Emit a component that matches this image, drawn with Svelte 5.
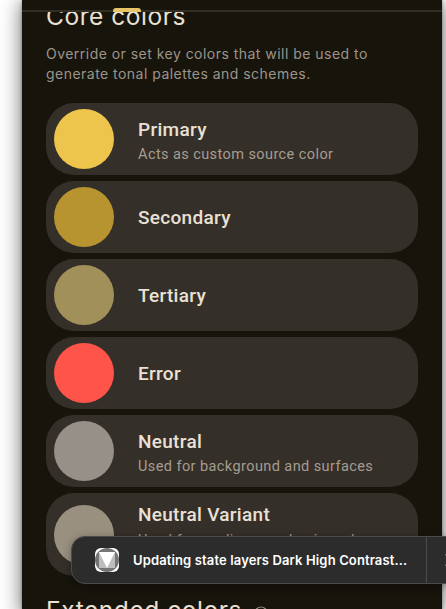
<script>
  const colors = [
    { name: 'Primary', note: 'Acts as custom source color', fill: '#edc54c' },
    { name: 'Secondary', fill: '#b7942f' },
    { name: 'Tertiary', fill: '#a2905b' },
    { name: 'Error', fill: '#ff544a' },
    { name: 'Neutral', note: 'Used for background and surfaces', fill: '#969089' },
    { name: 'Neutral Variant', note: 'Used for medium emphasis and variants', fill: '#999080' }
  ];
</script>

<div class="screen">
  <main class="panel">
    <div class="topbar"><span class="tab"></span></div>
    <div class="content">
      <h2>Core colors</h2>
      <p class="intro">Override or set key colors that will be used to generate tonal palettes and schemes.</p>
      <div class="list">
        {#each colors as color}
          <div class="card">
            <span class="swatch" style="background: {color.fill}"></span>
            <div class="label" class:noted={color.note}>
              <h3>{color.name}</h3>
              {#if color.note}<p>{color.note}</p>{/if}
            </div>
          </div>
        {/each}
      </div>
      <h2 class="extended">Extended colors
        <svg width="14" height="14" viewBox="0 0 14 14" fill="none" stroke="#999080" stroke-width="1.2"><circle cx="7" cy="7" r="6" /><path d="M7 6.3v4M7 3.5v1.3" /></svg>
      </h2>
    </div>
  </main>
  <div class="toast">
    <svg class="logo" width="24" height="24" viewBox="0 0 24 24">
      <rect width="24" height="24" rx="6" fill="#fff" />
      <circle cx="12" cy="12" r="12" fill="#757575" />
      <path d="M4 4h16v16H4z" fill="#bdbdbd" />
      <path d="M4 4h16l-8 16z" fill="#fff" />
    </svg>
    <span class="message">Updating state layers Dark High Contrast...</span>
    <span class="close">
      <svg width="12" height="12" viewBox="0 0 12 12" stroke="#b5b5b5" stroke-width="1.1"><path d="M.5 .5l11 11M11.5 .5l-11 11" /></svg>
    </span>
  </div>
</div>

<style>
  .screen {
    position: relative;
    display: flex;
    box-sizing: border-box;
    width: 446px;
    height: 609px;
    padding-left: 22px;
    overflow: hidden;
    background: #fff;
    font-family: Roboto, sans-serif;
  }
  .panel {
    width: 420px;
    height: 609px;
    flex: none;
    background: #17140c;
    box-shadow: 0 1px 3px rgba(0, 0, 0, .35), 0 4px 18px 2px rgba(0, 0, 0, .5);
  }
  .topbar {
    height: 12px;
    box-sizing: border-box;
    border-bottom: 2px solid #322e24;
    position: relative;
    z-index: 1;
    background: #17140c;
  }
  .tab {
    position: absolute;
    left: 91px;
    top: 8px;
    width: 28px;
    height: 4px;
    border-radius: 3px 3px 0 0;
    background: #e7c468;
  }
  .content { padding: 0 24px; margin-top: -12px; }
  h2, h3, p { margin: 0; }
  h2 {
    color: #eae1d4;
    font-family: Inter, sans-serif;
    font-size: 24.5px;
    line-height: 32px;
    font-weight: 400;
    letter-spacing: .55px;
    white-space: nowrap;
  }
  .intro {
    width: 350px;
    margin-top: 12px;
    color: #9b9589;
    font-family: Inter, sans-serif;
    font-size: 14px;
    line-height: 20px;
    letter-spacing: .47px;
  }
  .list { display: flex; flex-direction: column; gap: 6px; margin-top: 19px; }
  .card {
    display: flex;
    align-items: center;
    box-sizing: border-box;
    min-height: 72px;
    padding: 6px 32px 6px 8px;
    border-radius: 28px;
    background: #352f29;
  }
  .card:last-child { height: 83px; padding-block: 0; }
  .swatch { width: 60px; height: 60px; flex: none; border-radius: 50%; }
  .label { margin-left: 24px; padding-top: 2px; }
  .label.noted { padding-top: 5px; }
  h3 {
    color: #eae1d4;
    font-size: 19px;
    line-height: 24px;
    font-weight: 500;
    letter-spacing: .3px;
  }
  .label p {
    color: #a59d90;
    font-size: 14.5px;
    line-height: 20px;
    letter-spacing: .42px;
    margin-top: 3px;
  }
  .card:last-child .label { padding-top: 2px; }
  .card:last-child p { line-height: 19px; margin-top: 4px; }
  .extended { margin-top: 18px; display: flex; align-items: center; gap: 12px; }
  .extended svg { margin-top: 5px; }
  .toast {
    position: absolute;
    z-index: 2;
    left: 71px;
    top: 536px;
    box-sizing: border-box;
    width: 403px;
    height: 48px;
    display: flex;
    align-items: center;
    border: 1px solid #4b4b4b;
    border-radius: 14px;
    background: #2c2c2c;
    box-shadow: 0 2px 8px rgba(0, 0, 0, .35);
  }
  .logo { margin-left: 23px; flex: none; }
  .message {
    width: 293px;
    box-sizing: border-box;
    flex: none;
    padding-left: 14px;
    color: #fff;
    font: 600 13px/20px Inter, sans-serif;
    letter-spacing: .13px;
    white-space: nowrap;
  }
  .close {
    align-self: stretch;
    flex: none;
    display: flex;
    align-items: center;
    width: 29px;
    margin-left: 14px;
    padding-left: 18px;
    box-sizing: border-box;
    border-left: 1px solid #4b4b4b;
  }
  .close svg { flex: none; }
</style>
